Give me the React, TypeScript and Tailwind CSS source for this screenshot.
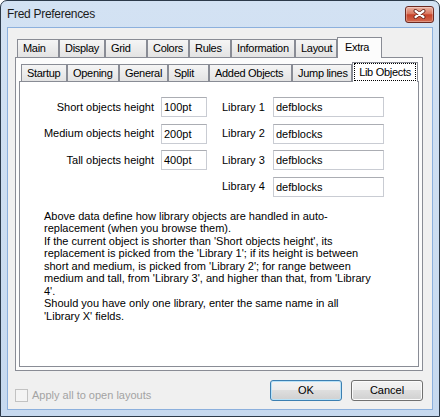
const outerTabs = [
  { label: 'Main', w: 'w-[42px]' },
  { label: 'Display', w: 'w-[46px]' },
  { label: 'Grid', w: 'w-[42px]' },
  { label: 'Colors', w: 'w-[42px]' },
  { label: 'Rules', w: 'w-[42px]' },
  { label: 'Information', w: 'w-[64px]' },
  { label: 'Layout', w: 'w-[42px]' },
]

const innerTabs = [
  { label: 'Startup', w: 'w-[46px]' },
  { label: 'Opening', w: 'w-[52px]' },
  { label: 'General', w: 'w-[49px]' },
  { label: 'Split', w: 'w-[41px]' },
  { label: 'Added Objects', w: 'w-[83px]' },
  { label: 'Jump lines', w: 'w-[60px]' },
]

const rows = [
  { label: 'Short objects height', value: '100pt', lib: 'Library 1' },
  { label: 'Medium objects height', value: '200pt', lib: 'Library 2' },
  { label: 'Tall objects height', value: '400pt', lib: 'Library 3' },
  { label: '', value: '', lib: 'Library 4' },
]

const lines = [
  'Above data define how library objects are handled in auto-',
  'replacement (when you browse them).',
  "If the current object is shorter than 'Short objects height', its",
  "replacement is picked from the 'Library 1'; if its height is between",
  "short and medium, is picked from 'Library 2'; for range between",
  "medium and tall, from 'Library 3', and higher than that, from 'Library",
  "4'.",
  'Should you have only one library, enter the same name in all',
  "'Library X' fields.",
]

function TextBox({ value, w }: { value: string; w: string }) {
  return (
    <div className={`${w} h-[20px] border border-[#c9ccd3] border-t-[#abadb3] bg-white pl-[2px] leading-[18px]`}>
      {value}
    </div>
  )
}

function Button({ label, isDefault }: { label: string; isDefault?: boolean }) {
  return (
    <div
      className={`flex h-[21px] w-[72px] items-center justify-center rounded-[3px] border bg-[linear-gradient(#f3f3f3,#ececec_50%,#dedede_50%,#d0d0d0)] ${
        isDefault ? 'border-[#3c7fb1] shadow-[inset_0_0_0_1px_#b8e2f8]' : 'border-[#707070] shadow-[inset_0_0_0_1px_#fbfbfb]'
      }`}
    >
      {label}
    </div>
  )
}

export default function App() {
  return (
    <div className="h-[417px] w-[440px] bg-white">
      <div className="flex h-full flex-col rounded-t-[7px] border border-[#2c3a4a] bg-linear-to-b from-[#d3e2f3] to-[#c6d9ef] px-[6px] pb-[6px] font-['Liberation_Sans',Arial,sans-serif] text-[11px] text-black">
        {/* Title bar */}
        <div className="flex h-[26px] items-center justify-between">
          <span className="text-[12px] tracking-[-0.3px] text-[#1b1b1b]">Fred Preferences</span>
          <div className="-mr-px flex h-[17px] w-[29px] items-center justify-center rounded-[3px] border border-[#6d2a22] bg-[linear-gradient(#ebb3a5,#d9775f_45%,#c6422a_52%,#d36a4f)] shadow-[inset_0_0_0_1px_rgba(255,255,255,0.3)]">
            <svg width="13" height="10" viewBox="0 0 13 10">
              <path d="M2.5 2L10.5 8M10.5 2L2.5 8" stroke="#5a1a12" strokeWidth="3.8" strokeLinecap="round" />
              <path d="M2.5 2L10.5 8M10.5 2L2.5 8" stroke="#ffffff" strokeWidth="2.2" strokeLinecap="round" />
            </svg>
          </div>
        </div>

        {/* Client area */}
        <div className="flex flex-1 flex-col border border-[#8cb0dd] bg-[#f0f0f0] pt-[9px]">
          {/* Outer tabs */}
          <div className="ml-[9px] flex h-[20px] items-end tracking-[-0.3px]">
            {outerTabs.map((t) => (
              <div
                key={t.label}
                className={`${t.w} h-[18px] border border-b-0 border-[#898c95] bg-linear-to-b from-[#f5f5f5] to-[#e3e3e3] pl-[5px] leading-[17px]`}
              >
                {t.label}
              </div>
            ))}
            <div className="relative z-10 -mb-px h-[21px] w-[45px] border border-b-0 border-[#898c95] bg-[#fcfcfc] pl-[7px] leading-[18px]">
              Extra
            </div>
          </div>

          <div className="ml-[7px] flex h-[314px] w-[408px] flex-col border border-[#898c95] bg-[#fcfcfc] px-[3px] pb-[3px] pt-[4px]">
            {/* Inner tabs */}
            <div className="ml-[2px] flex h-[19px] items-end tracking-[-0.3px]">
              {innerTabs.map((t) => (
                <div
                  key={t.label}
                  className={`${t.w} h-[17px] border border-b-0 border-[#898c95] bg-linear-to-b from-[#f5f5f5] to-[#e3e3e3] pl-[5px] leading-[16px]`}
                >
                  {t.label}
                </div>
              ))}
              <div className="relative z-10 -mb-px flex h-[20px] w-[66px] border border-b-0 border-[#898c95] bg-white px-px pt-0">
                <span className="h-[18px] flex-1 border border-dotted border-black text-center leading-[16px]">
                  Lib Objects
                </span>
              </div>
            </div>

            {/* Lib Objects page */}
            <div className="flex flex-1 flex-col border border-[#898c95] bg-white pt-[15px]">
              <div className="flex flex-col gap-[6.5px]">
                {rows.map((r) => (
                  <div key={r.lib} className="flex h-[20px] items-center">
                    <div className="w-[134px] text-right">{r.label}</div>
                    <div className="ml-[7px] w-[46px]">
                      {r.value && <TextBox value={r.value} w="w-[46px]" />}
                    </div>
                    <div className="ml-[15px] w-[51px]">{r.lib}</div>
                    <TextBox value="defblocks" w="w-[111px]" />
                  </div>
                ))}
              </div>

              <div className="ml-[24px] mt-[13px] whitespace-nowrap leading-[12.5px]">
                {lines.map((l, i) => (
                  <div key={i}>{l}</div>
                ))}
              </div>
            </div>
          </div>

          {/* Bottom row */}
          <div className="mt-[9px] flex items-start">
            <div className="ml-[7px] mt-[7px] flex items-center">
              <div className="h-[13px] w-[13px] border border-[#c2c2c2] bg-[#f4f4f4]" />
              <span className="ml-[4px] text-[#a3a3a3]">Apply all to open layouts</span>
            </div>
            <div className="ml-auto mr-[9px] flex gap-[9px]">
              <Button label="OK" isDefault />
              <Button label="Cancel" />
            </div>
          </div>
        </div>
      </div>
    </div>
  )
}
